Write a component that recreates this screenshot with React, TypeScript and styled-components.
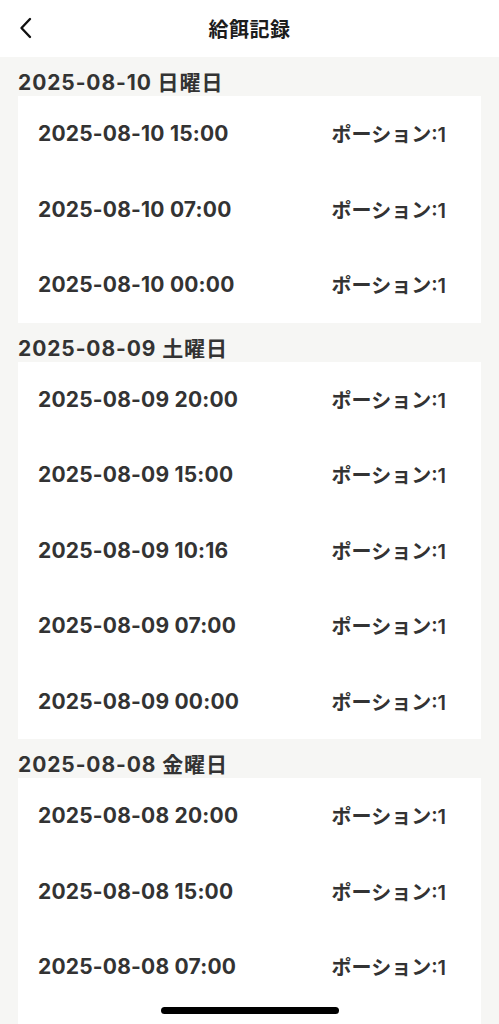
import styled, { createGlobalStyle } from "styled-components";

const GlobalStyle = createGlobalStyle`
  html, body {
    margin: 0;
    padding: 0;
    background: #f6f6f4;
    font-family: "Inter", "Noto Sans CJK JP", sans-serif;
    color: #333333;
  }
`;

const Page = styled.div`
  min-height: 100vh;
  background: #f6f6f4;
`;

const Header = styled.header`
  height: 57px;
  background: #ffffff;
  display: flex;
  align-items: center;
  justify-content: center;
  position: relative;
`;

const BackButton = styled.button`
  position: absolute;
  left: 12px;
  top: 14px;
  width: 28px;
  height: 28px;
  padding: 0;
  border: none;
  background: none;
  display: flex;
  align-items: center;
  justify-content: center;
`;

const Title = styled.h1`
  margin: 0;
  font-size: 20px;
  font-weight: 600;
  color: #1c1c1c;
  letter-spacing: 0.5px;
`;

const Section = styled.section`
  padding: 0 18px;
`;

const DayHeading = styled.h2`
  margin: 0;
  padding: 15px 0 2px;
  line-height: 22px;
  font-size: 21px;
  font-weight: 700;
  letter-spacing: 0.9px;
  color: #333333;
`;

const Card = styled.div<{ $last?: boolean }>`
  background: #ffffff;
  padding-bottom: ${(p) => (p.$last ? "34px" : "0")};
`;

const Row = styled.div`
  height: 75.5px;
  display: flex;
  align-items: center;
  justify-content: space-between;
  padding: 0 35px 0 20px;
`;

const Time = styled.span`
  font-size: 21px;
  font-weight: 700;
  letter-spacing: 0.2px;
  color: #333333;
`;

const Portion = styled.span`
  font-size: 20px;
  font-weight: 600;
  color: #333333;
`;

const HomeIndicator = styled.div`
  position: fixed;
  left: 50%;
  bottom: 10px;
  transform: translateX(-50%);
  width: 178px;
  height: 7px;
  border-radius: 4px;
  background: #000000;
`;

const days = [
  {
    label: "2025-08-10 日曜日",
    times: ["2025-08-10 15:00", "2025-08-10 07:00", "2025-08-10 00:00"],
  },
  {
    label: "2025-08-09 土曜日",
    times: [
      "2025-08-09 20:00",
      "2025-08-09 15:00",
      "2025-08-09 10:16",
      "2025-08-09 07:00",
      "2025-08-09 00:00",
    ],
  },
  {
    label: "2025-08-08 金曜日",
    times: ["2025-08-08 20:00", "2025-08-08 15:00", "2025-08-08 07:00"],
  },
];

const App = () => {
  return (
    <Page>
      <GlobalStyle />
      <Header>
        <BackButton aria-label="戻る">
          <svg width="16" height="24" viewBox="0 0 16 24" fill="none">
            <path
              d="M12 3 L3.5 12 L12 21"
              stroke="#111"
              strokeWidth="2.4"
              strokeLinecap="round"
              strokeLinejoin="round"
            />
          </svg>
        </BackButton>
        <Title>給餌記録</Title>
      </Header>
      {days.map((day, i) => (
        <Section key={day.label}>
          <DayHeading>{day.label}</DayHeading>
          <Card $last={i === days.length - 1}>
            {day.times.map((t) => (
              <Row key={t}>
                <Time>{t}</Time>
                <Portion>ポーション:1</Portion>
              </Row>
            ))}
          </Card>
        </Section>
      ))}
      <HomeIndicator />
    </Page>
  );
};

export default App;
